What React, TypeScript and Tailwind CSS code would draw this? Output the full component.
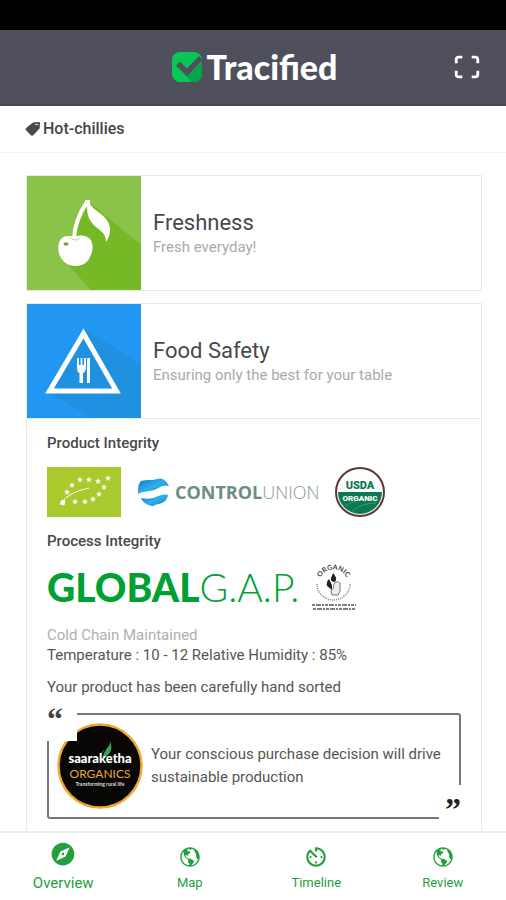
import type { ReactNode } from "react";
import { IoMdCompass, IoMdGlobe, IoMdQrScanner, IoMdTimer } from "react-icons/io";

function TracifiedLogo() {
  return (
    <h1 className="flex items-center gap-1 font-['Lato',sans-serif] text-[34px] leading-10 font-black text-white">
      <svg viewBox="0 0 30 30" className="size-[30px]" aria-hidden="true">
        <rect width="30" height="30" rx="8" fill="#08c658" />
        <path d="M15 25 30 10v12a8 8 0 0 1-8 8h-2z" fill="#04a548" />
        <path d="m6 11.500 9 9L29 6" fill="none" stroke="#4f505c" strokeWidth="5.500" />
      </svg>
      Tracified
    </h1>
  );
}

function TagIcon() {
  return (
    <svg viewBox="0 0 16 16" className="size-4" aria-hidden="true">
      <path d="M8 1.500 14 1q1 0 1 1l-.3 5.200L8.500 14q-1.400 1.400-2.800 0L1.300 9.600q-1.400-1.400 0-2.800z" fill="#494952" />
      <path d="M10 3.500h3.500" stroke="#c9c9cd" strokeWidth="1.200" />
    </svg>
  );
}

function CherryTile() {
  return (
    <svg viewBox="0 0 114 114" className="size-[114px] shrink-0" aria-hidden="true">
      <rect width="114" height="114" fill="#8bc34a" />
      <path d="M62 26 114 69v45H64L36 83z" fill="#76b927" />
      <path d="M60 26q-12 17-13 37" fill="none" stroke="#fff" strokeWidth="4" />
      <path d="M58 24h5v4c4 7 15 10 19 20 2 6 1 12-3 18 0-8-5-11-10-15-7-6-9-12-9-21z" fill="#fff" />
      <path d="M48 61c6-3 12-1 15 2 4 5 3 12 0 18-3 7-9 9-15 9-7 0-12-4-15-10-3-7-2-14 2-18 4-3 9-2 13-1z" fill="#fff" />
      <path d="M44 62q4 4 9 0" fill="none" stroke="#b3d68b" strokeWidth="1" />
      <ellipse cx="39" cy="68" rx="2.500" ry="1.800" fill="#6da637" />
    </svg>
  );
}

function SafetyTile() {
  return (
    <svg viewBox="0 0 114 114" className="size-[114px] shrink-0" aria-hidden="true">
      <rect width="114" height="114" fill="#2196f3" />
      <path d="M57 25 114 60v54H66L20 88z" fill="#2090e0" />
      <path d="M56.500 29.500 89.500 87h-67z" fill="none" stroke="#fff" strokeWidth="5" />
      <path d="M51 54v8M54.500 54v8M58 54v8" fill="none" stroke="#fff" strokeWidth="1.800" />
      <path d="M50.100 61h8.800v4q-.5 3-2.900 4v10h-3.500V69q-2.400-1-2.400-4zM60.500 54H63v25h-3V56z" fill="#fff" />
    </svg>
  );
}

function EuLeafLogo() {
  const stars = [
    [20, 25], [25, 18], [33, 12.500], [42, 12.500], [51, 14], [61, 11],
    [57, 20], [52, 27], [46, 32], [38, 34.500], [28, 34.500],
  ];
  return (
    <svg viewBox="0 0 74 50" className="h-[50px] w-[74px]" role="img" aria-label="EU organic leaf">
      <rect width="74" height="50" fill="#a9ca2c" />
      <path d="M14 36Q22 25 42 21" fill="none" stroke="#fff" strokeWidth="1" />
      <path d="m13 37 2-4 3 1-1 4z" fill="#fff" stroke="#fff" />
      {stars.map(([x, y]) => (
        <path
          key={`${x}-${y}`}
          transform={`translate(${x} ${y})`}
          d="M0-2.600.8-.8 2.600-.6 1.200.7 1.600 2.600 0 1.600-1.600 2.600-1.200.7-2.600-.6-.8-.8z"
          fill="#fff"
          stroke="#fff"
          strokeWidth=".3"
        />
      ))}
    </svg>
  );
}

function ControlUnionLogo() {
  return (
    <div className="flex items-center gap-1 font-['Open_Sans',sans-serif] text-[18px] leading-6">
      <svg viewBox="0 0 34 30" className="h-[30px] w-[34px]" aria-hidden="true">
        <defs>
          <linearGradient id="wave" x1="0" x2="1" y1="0" y2="1">
            <stop offset="0" stopColor="#1173bd" />
            <stop offset=".5" stopColor="#2fb0ed" />
            <stop offset="1" stopColor="#1273bd" />
          </linearGradient>
        </defs>
        <path d="M4 4c6-2 11 0 16-2 5-2 9 1 12 7-6-2-10 2-15 4-6 2-11 1-16 4C1 11 1 7 4 4z" fill="url(#wave)" />
        <path d="M4 21c6 1 10 1 15-1s8-3 12-2c-1 6-5 8-9 9-3 0-4 2-7 2-5-1-9-3-11-8z" fill="url(#wave)" />
      </svg>
      <span>
        <span className="font-bold text-[#6f8c84]">CONTROL</span>
        <span className="font-light text-[#8c9896]">UNION</span>
      </span>
    </div>
  );
}

function UsdaLogo() {
  return (
    <svg viewBox="0 0 50 50" className="size-[50px]" role="img" aria-label="USDA Organic">
      <circle cx="25" cy="25" r="24" fill="#fff" stroke="#5e3732" strokeWidth="2" />
      <path d="M3 25h44a22 22 0 0 1-44 0z" fill="#0c7951" />
      <path d="M10 39q14-9 33-7M17 44q10-8 24-8" fill="none" stroke="#3d9574" />
      <text x="25" y="22" textAnchor="middle" fontFamily="Roboto" fontWeight="900" fontSize="11" fill="#0c7951">USDA</text>
      <text x="25" y="34" textAnchor="middle" fontFamily="Roboto" fontWeight="900" fontSize="8" fill="#fff">ORGANIC</text>
    </svg>
  );
}

function OrganicSeal() {
  return (
    <svg viewBox="0 0 46 48" className="h-12 w-[46px]" role="img" aria-label="Organic certification seal">
      <defs>
        <path id="sealTop" d="M8 21a13.500 13.500 0 0 1 29 0" />
      </defs>
      <text fontFamily="Lato" fontWeight="700" fontSize="7" fill="#444">
        <textPath href="#sealTop" startOffset="50%" textAnchor="middle">ORGANIC</textPath>
      </text>
      <path d="M6 21a16.500 16 0 0 0 33 0" fill="none" stroke="#888" strokeWidth="1.500" strokeDasharray="1 1" />
      <path d="M22 10q5 5 2 9-5 0-4-4zM18 16l3 6v5l-5-4q-1-4 2-7z" fill="#222" />
      <path d="M23 21q3-4 6-1v8l-2 4h-6l-1-4q3-2 3-7z" fill="#eee" stroke="#555" strokeWidth=".8" />
      <path d="M1 42h44M2 46h43" stroke="#555" strokeWidth="1.500" strokeDasharray="3 1 5 1 2 1" />
    </svg>
  );
}

function SaarakethaLogo() {
  return (
    <svg viewBox="0 0 86 86" className="size-[86px] shrink-0" role="img" aria-label="Saaraketha Organics">
      <circle cx="43" cy="43" r="41.500" fill="#080706" stroke="#f0a832" strokeWidth="2.500" />
      <path d="M44 34c-2-8 10-7 9-16 4 9-1 15-8 18q2-7 5-11-5 3-6 9z" fill="#36a160" />
      <text x="43" y="40" textAnchor="middle" fontFamily="Lato" fontWeight="900" fontSize="13" fill="#fff">saaraketha</text>
      <text x="43" y="55" textAnchor="middle" fontFamily="Lato" fontSize="12" fill="#e6a73c">ORGANICS</text>
      <text x="43" y="63" textAnchor="middle" fontFamily="Lato" fontWeight="700" fontSize="5" fill="#ddd">Transforming rural life</text>
    </svg>
  );
}

function CardHeader({ tile, title, subtitle }: { tile: ReactNode; title: string; subtitle: string }) {
  return (
    <div className="flex items-center gap-3">
      {tile}
      <div>
        <h2 className="text-[22px] leading-7 text-[#48484c]">{title}</h2>
        <p className="text-[15px] leading-5 text-[#a9a9a9]">{subtitle}</p>
      </div>
    </div>
  );
}

const tabs = [
  { label: "Overview", Icon: IoMdCompass, active: true },
  { label: "Map", Icon: IoMdGlobe, active: false },
  { label: "Timeline", Icon: IoMdTimer, active: false },
  { label: "Review", Icon: IoMdGlobe, active: false },
];

export default function App() {
  return (
    <div className="flex h-screen flex-col bg-white font-['Roboto',sans-serif] text-[15px] text-[#555]">
      <div className="h-[30px] shrink-0 bg-black" />
      <header className="grid h-[76px] shrink-0 grid-cols-[1fr_auto_1fr] items-center border-b-2 border-[#484955] bg-[#4f505c] pr-6 pl-7">
        <div className="col-start-2">
          <TracifiedLogo />
        </div>
        <button type="button" aria-label="Scan code" className="justify-self-end text-white">
          <IoMdQrScanner className="size-[30px]" />
        </button>
      </header>

      <div className="flex h-[47px] shrink-0 items-center gap-[2px] border-b border-[#f2f2f2] px-[25px] text-[16px] font-medium text-[#44444c]">
        <TagIcon />
        Hot-chillies
      </div>

      <main className="flex min-h-0 flex-1 flex-col gap-3 overflow-y-auto pt-[22px] pr-6 pl-[26px] [scrollbar-width:none]">
        <section className="shrink-0 border border-[#e9e9e9]">
          <CardHeader tile={<CherryTile />} title="Freshness" subtitle="Fresh everyday!" />
        </section>

        <section className="shrink-0 border border-[#e9e9e9]">
          <CardHeader tile={<SafetyTile />} title="Food Safety" subtitle="Ensuring only the best for your table" />
          <div className="border-t border-[#e9e9e9] px-5 pt-[14px] pb-8">
            <h3 className="leading-5 font-medium text-[#48484c]">Product Integrity</h3>
            <div className="mt-[14px] flex items-center gap-4">
              <EuLeafLogo />
              <ControlUnionLogo />
              <UsdaLogo />
            </div>
            <h3 className="mt-[14px] leading-5 font-medium text-[#48484c]">Process Integrity</h3>
            <div className="mt-3 flex items-center gap-3">
              <p className="font-['Lato',sans-serif] text-[39px] leading-12 text-[#00a032]">
                <span className="font-black">GLOBAL</span>
                <span className="font-light">G.A.P.</span>
              </p>
              <OrganicSeal />
            </div>
            <p className="mt-[14px] leading-5 text-[#b0b0b0]">Cold Chain Maintained</p>
            <p className="leading-5">Temperature : 10 - 12 Relative Humidity : 85%</p>
            <p className="mt-3 leading-5">Your product has been carefully hand sorted</p>
            <blockquote className="relative mt-4 flex h-[106px] items-center gap-2 rounded-[3px] border-2 border-[#777] pl-2">
              <span className="absolute -top-2 -left-[2px] h-[34px] w-[30px] bg-white font-['Liberation_Serif',serif] text-[32px] leading-6 font-bold text-[#444]">“</span>
              <SaarakethaLogo />
              <p className="leading-[23px]">Your conscious purchase decision will drive sustainable production</p>
              <span className="absolute -right-[2px] -bottom-[2px] h-[34px] w-[22px] bg-white text-right font-['Liberation_Serif',serif] text-[32px] leading-12 font-bold text-[#222]">”</span>
            </blockquote>
          </div>
        </section>
      </main>

      <nav className="grid h-[69px] shrink-0 grid-cols-4 border-t-2 border-[#ececec] bg-white text-[#23a03e]">
        {tabs.map(({ label, Icon, active }) => (
          <button
            key={label}
            type="button"
            className={
              active
                ? "flex flex-col items-center gap-1 pt-2 text-[15px] leading-6"
                : "flex flex-col items-center gap-1 pt-3 text-[13px] leading-5"
            }
          >
            <Icon className={active ? "size-[26px]" : "size-6"} />
            {label}
          </button>
        ))}
      </nav>
    </div>
  );
}
